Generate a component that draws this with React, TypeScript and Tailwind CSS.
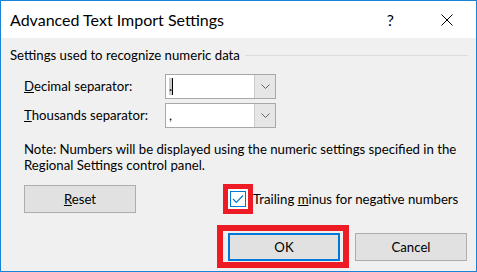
import React from "react";

function Chevron() {
  return (
    <svg width="9" height="5" viewBox="0 0 9 5" fill="none">
      <path d="M0.5 0.5 L4.5 4.5 L8.5 0.5" stroke="#606060" strokeWidth="1" />
    </svg>
  );
}

function Combo({ children }: { children: React.ReactNode }) {
  return (
    <div className="flex h-[25px] w-[111px] border border-[#a8a8a8] bg-white">
      <div className="flex flex-1 items-center pl-[3px]">{children}</div>
      <div className="flex w-[21px] items-center justify-center border-l border-[#cccccc] bg-[#e6e6e6]">
        <Chevron />
      </div>
    </div>
  );
}

function Button({ children, primary }: { children: React.ReactNode; primary?: boolean }) {
  return (
    <div
      className={`flex h-[28px] w-[112px] items-center justify-center bg-[#e1e1e1] ${
        primary ? "border-2 border-[#0078d7]" : "border border-[#adadad]"
      }`}
    >
      {children}
    </div>
  );
}

export default function App() {
  return (
    <div className="flex h-[272px] w-[477px] flex-col overflow-hidden border border-[#1883d7] bg-[#f0f0f0] font-['Lato',sans-serif] text-[13.2px] leading-[17px] text-black">
      {/* Title bar */}
      <div className="flex h-[37px] shrink-0 items-center bg-white pl-[9px]">
        <span className="text-[16px] leading-[20px]">Advanced Text Import Settings</span>
        <span className="ml-auto text-[16px] leading-[20px]">?</span>
        <svg className="ml-[47px] mr-[23px]" width="12" height="12" viewBox="0 0 12 12" fill="none">
          <path d="M0.5 0.5 L11.5 11.5 M11.5 0.5 L0.5 11.5" stroke="#000" strokeWidth="1" />
        </svg>
      </div>

      {/* Group header */}
      <div className="mt-[9px] flex items-center pl-[9px] pr-[8px]">
        <span>Settings used to recognize numeric data</span>
        <div className="ml-[5px] h-px flex-1 bg-[#dcdcdc]" />
      </div>

      <div className="mt-[10px] grid grid-cols-[141px_111px] gap-y-[4px] pl-[23px]">
        <div className="flex items-center">
          <span>
            <u>D</u>ecimal separator:
          </span>
        </div>
        <Combo>
          <span className="bg-[#cccccc] leading-[17px]">.</span>
          <span className="h-[17px] w-px bg-black" />
        </Combo>
        <div className="flex items-center">
          <span>
            <u>T</u>housands separator:
          </span>
        </div>
        <Combo>
          <span>,</span>
        </Combo>
      </div>

      <p className="mt-[13px] whitespace-nowrap pl-[23px] leading-[16px]">
        Note: Numbers will be displayed using the numeric settings specified in the
        <br />
        Regional Settings control panel.
      </p>

      <div className="mt-[11px] flex items-center pl-[23px]">
        <Button>
          <span>
            <u>R</u>eset
          </span>
        </Button>
        <span className="ml-[87px] flex border-[5px] border-[#ed1c24] bg-white p-[2px]">
          <span className="flex h-[16px] w-[16px] items-center justify-center border border-[#0078d7] bg-white">
            <svg width="12" height="10" viewBox="0 0 12 10" fill="none">
              <path d="M1 5 L4.3 8.3 L11 1.5" stroke="#0078d7" strokeWidth="1.2" />
            </svg>
          </span>
        </span>
        <span className="whitespace-nowrap">
          Trailing <u>m</u>inus for negative numbers
        </span>
      </div>

      <div className="mt-[19px] flex justify-end gap-[15px] pr-[9px]">
        <div className="relative">
          <Button primary>
            <span>OK</span>
          </Button>
          <div className="pointer-events-none absolute -bottom-[7px] -left-[11px] -right-[9px] -top-[8px] border-[6px] border-[#ed1c24]" />
        </div>
        <Button>
          <span>Cancel</span>
        </Button>
      </div>
    </div>
  );
}
